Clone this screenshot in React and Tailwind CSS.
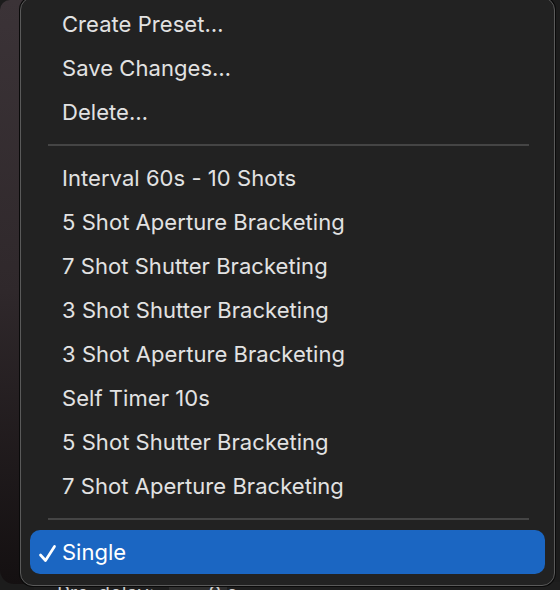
import React from "react";

const groupA = ["Create Preset…", "Save Changes…", "Delete…"];
const groupB = [
  "Interval 60s - 10 Shots",
  "5 Shot Aperture Bracketing",
  "7 Shot Shutter Bracketing",
  "3 Shot Shutter Bracketing",
  "3 Shot Aperture Bracketing",
  "Self Timer 10s",
  "5 Shot Shutter Bracketing",
  "7 Shot Aperture Bracketing",
];

function Item({ label }) {
  return (
    <div className="h-[44px] flex items-center pl-[41px] pt-[1px] text-[22px] text-[#e2e2e2] tracking-[0.05px]">
      {label}
    </div>
  );
}

function Sep() {
  return <div className="my-[10px] ml-[27px] mr-[25px] h-[2px] bg-[#454545]" />;
}

export default function App() {
  return (
    <div
      className="relative w-[560px] h-[590px] overflow-hidden bg-[#1c1c1c]"
      style={{ fontFamily: "Inter, 'Noto Sans', sans-serif" }}
    >
      {/* background window */}
      <div className="flex h-full">
        <div className="w-[34px] h-[584px] rounded-tl-[10px] rounded-bl-[14px] bg-gradient-to-b from-[#3b3337] via-[#2f282b] to-[#141011]" />
        <div className="flex-1 flex flex-col">
          <div className="flex-1" />
          <div className="h-[8px] flex items-start pl-[23px] text-[20px] leading-[20px] text-[#cfcfcf] pt-[1px] bg-[#1e1e1e]">
            <span>Pre-delay:</span>
            <span className="ml-[14px] w-[58px] h-[8px] bg-[#2e2e2e]" />
            <span className="ml-[-18px]">0 s</span>
          </div>
        </div>
      </div>

      {/* menu overlay */}
      <div className="absolute left-[20px] top-[-3px] w-[535px] h-[589px] rounded-[13px] border border-[#5a5a5a] bg-[#222222] shadow-[0_0_0_1px_#0a0a0a]">
        <div className="pt-[4px]">
          {groupA.map((l) => (
            <Item key={l} label={l} />
          ))}
          <Sep />
          {groupB.map((l) => (
            <Item key={l} label={l} />
          ))}
          <Sep />
          <div className="mx-[9px] h-[44px] rounded-[10px] bg-[#1b66c2] flex items-center text-white text-[22px]">
            <svg width="32" height="44" viewBox="0 0 32 44" className="shrink-0">
              <path d="M10.5 25 L15.5 30.5 L24.5 16.5" fill="none" stroke="#fff" strokeWidth="2.7" strokeLinecap="round" strokeLinejoin="round" />
            </svg>
            <span className="pt-[1px]">Single</span>
          </div>
        </div>
      </div>
    </div>
  );
}
